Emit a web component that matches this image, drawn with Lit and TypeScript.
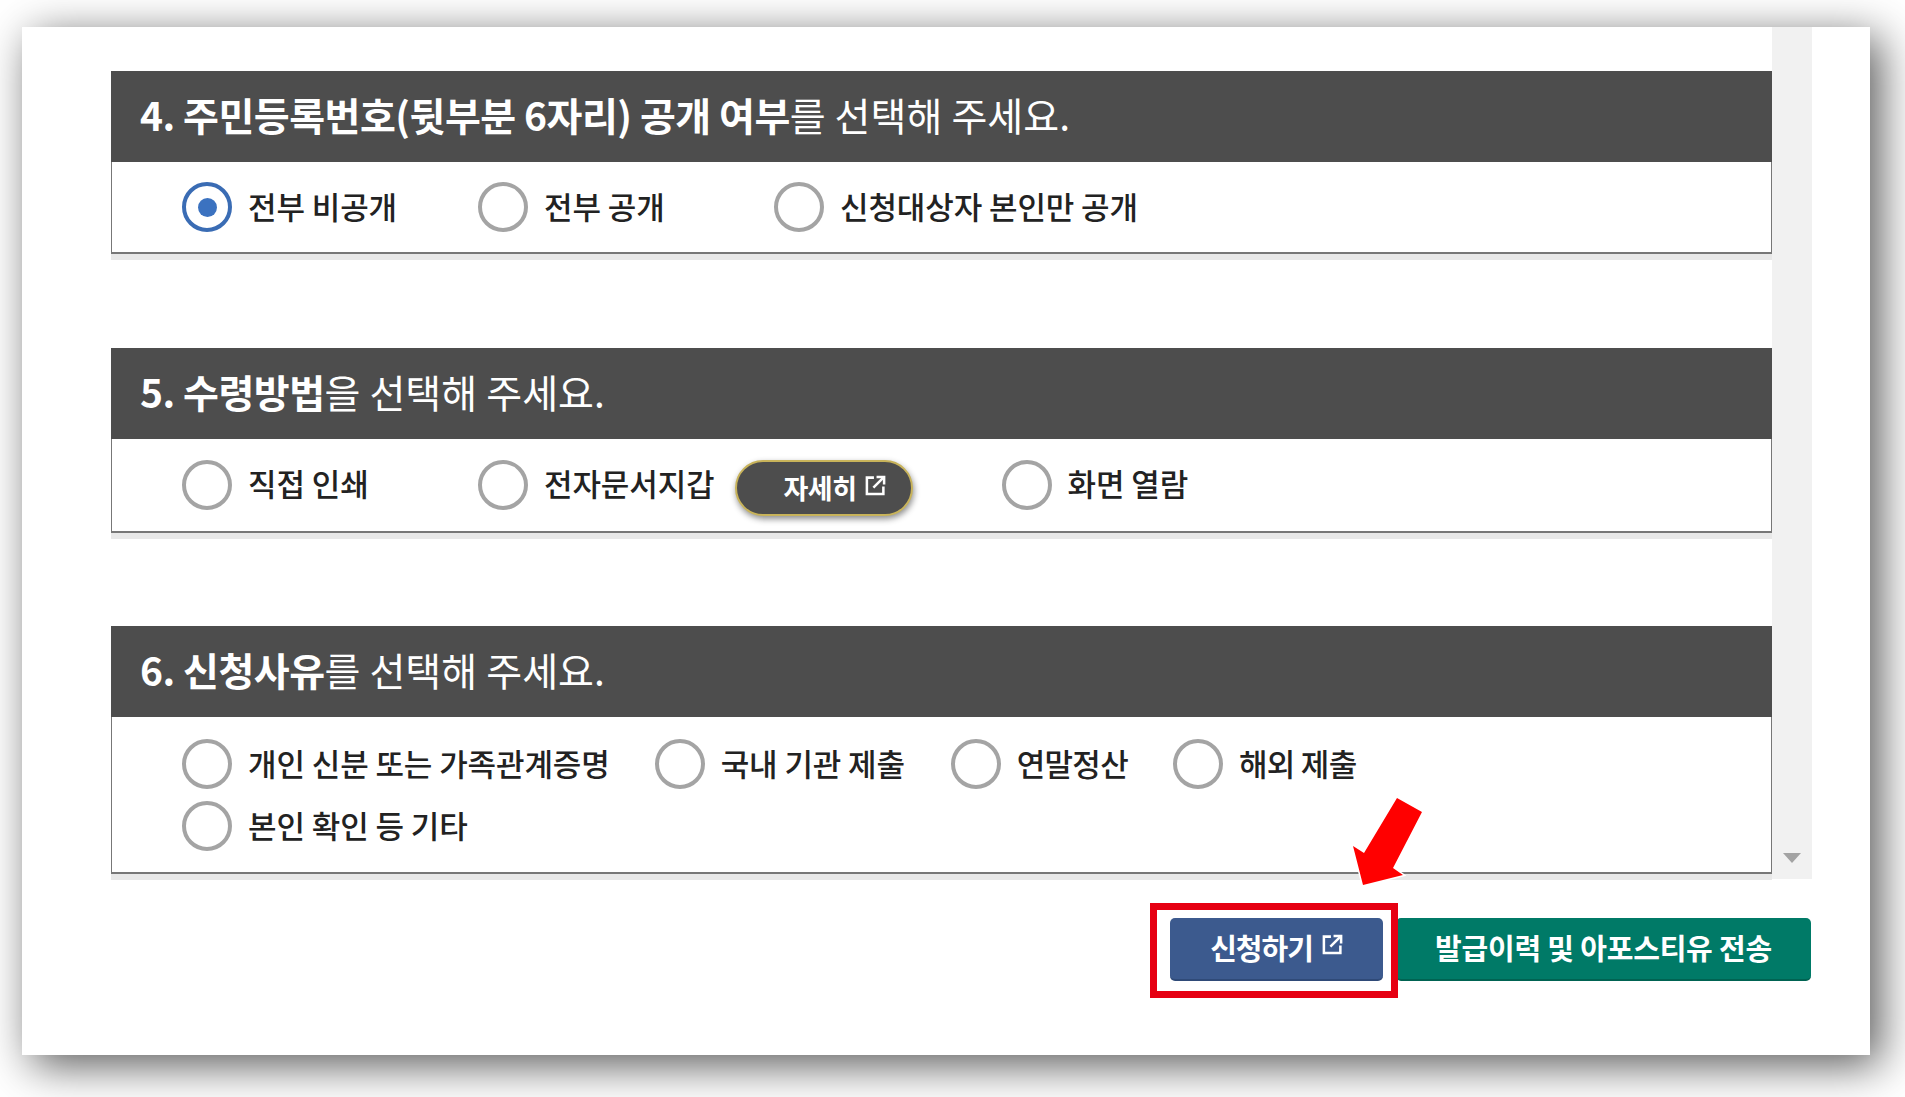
import { LitElement, html, css, svg } from "lit";
import { customElement } from "lit/decorators.js";

const extIcon = html`<svg class="ext" viewBox="0 0 20 20" fill="none" stroke="#fff" stroke-width="2.400">
  <path d="M8.500 2.500H1.800V18H17.500V11" />
  <path d="M8 12L17.500 2.500" />
  <path d="M11 1.800H18.200V9" />
</svg>`;

const arrow = svg`<path d="M45 1L70 15L41 71L51 78L11 88L1 49L12 56Z" fill="#f00" stroke="#fff" stroke-width="3" paint-order="stroke"/>`;

@customElement("app-root")
export class AppRoot extends LitElement {
  static styles = css`
    :host {
      display: block;
      width: 1905px;
      height: 1097px;
      box-sizing: border-box;
      padding: 27px 35px 42px 22px;
      background: #fff;
      overflow: hidden;
      font-family: "Noto Sans CJK KR", "Noto Sans", sans-serif;
      position: relative;
    }
    .panel {
      height: 1028px;
      background: #fff;
      box-shadow: 10px 10px 42px rgba(0, 0, 0, 0.66);
      display: flex;
      flex-direction: column;
    }
    .scroller {
      height: 852px;
      display: flex;
      padding-left: 89px;
    }
    .content {
      width: 1661px;
      padding-top: 44px;
      box-sizing: border-box;
    }
    .track {
      width: 40px;
      background: #f1f1f1;
      position: relative;
    }
    .down {
      position: absolute;
      left: 11px;
      bottom: 16px;
      width: 0;
      height: 0;
      border-left: 9px solid transparent;
      border-right: 9px solid transparent;
      border-top: 10px solid #a3a3a3;
    }
    .section {
      margin-bottom: 87.5px;
      border-bottom: 6px solid #e8e8e8;
    }
    .head {
      height: 91px;
      box-sizing: border-box;
      background: #4d4d4d;
      color: #fff;
      padding: 0 0 5px 29px;
      display: flex;
      align-items: center;
      font-size: 39px;
      font-weight: 400;
      letter-spacing: 0.1px;
      white-space: pre;
    }
    .head b {
      font-weight: 700;
      letter-spacing: -0.5px;
    }
    .body {
      border: 1px solid #777;
      border-top: 0;
      border-bottom-width: 2px;
      padding: 20px 20px 20px 70px;
      display: flex;
      flex-wrap: wrap;
      gap: 12px 45px;
      background: #fff;
    }
    .body.mid {
      padding-top: 21px;
      padding-bottom: 21px;
    }
    .body.tall {
      padding: 22px 200px 21px 70px;
    }
    .opt {
      min-width: 251px;
      display: flex;
      align-items: center;
      font-size: 31px;
      font-weight: 500;
      letter-spacing: -0.1px;
      color: #222;
      white-space: pre;
    }
    .opt.free {
      min-width: 0;
      letter-spacing: -0.7px;
    }
    .txt {
      display: block;
      margin-top: -4px;
    }
    .radio {
      width: 50px;
      height: 50px;
      box-sizing: border-box;
      border: 4px solid #a4a4a4;
      border-radius: 50%;
      margin-right: 16px;
      display: flex;
      align-items: center;
      justify-content: center;
      flex: none;
    }
    .radio.on {
      border-color: #3a6cb4;
    }
    .radio.on::after {
      content: "";
      width: 19px;
      height: 19px;
      border-radius: 50%;
      background: #3b72c0;
    }
    .pill {
      width: 178px;
      height: 56px;
      box-sizing: border-box;
      margin: 0 44px -6px 20px;
      border: 2px solid #c8b35a;
      border-radius: 28px;
      background: #4d4d4d;
      color: #fff;
      font-size: 27px;
      font-weight: 700;
      letter-spacing: -0.5px;
      display: flex;
      align-items: center;
      justify-content: center;
      gap: 8px;
      padding-left: 22px;
      box-shadow: 1px 3px 6px rgba(0, 0, 0, 0.45);
    }
    .ext {
      width: 21px;
      height: 21px;
      flex: none;
      margin-top: -5px;
    }
    .foot {
      display: flex;
      justify-content: flex-end;
      padding: 39px 59px 0 0;
      gap: 13px;
    }
    .btn {
      height: 63px;
      box-sizing: border-box;
      border-radius: 5px;
      padding-bottom: 3px;
      color: #fff;
      font-size: 29px;
      font-weight: 700;
      letter-spacing: -0.2px;
      display: flex;
      align-items: center;
      justify-content: center;
      gap: 9px;
      white-space: pre;
    }
    .apply {
      width: 213px;
      background: #3c5a8e;
      border-bottom: 2px solid #2f4a78;
      letter-spacing: -1px;
    }
    .issue {
      width: 415px;
      background: #007a67;
      border-bottom: 2px solid #006352;
    }
    .mark {
      position: absolute;
      left: 1150px;
      top: 903px;
      width: 248px;
      height: 95px;
      box-sizing: border-box;
      border: 7px solid #e60012;
    }
    .arrow {
      position: absolute;
      left: 1352px;
      top: 797px;
      width: 71px;
      height: 89px;
      overflow: visible;
    }
  `;

  private radio(label: string, on = false, extra: unknown = "", cls = "") {
    return html`<label class="opt ${cls}"><span class="radio ${on ? "on" : ""}"></span><span class="txt">${label}</span>${extra}</label>`;
  }

  render() {
    return html`
      <div class="panel">
        <div class="scroller">
          <div class="content">
            <section class="section">
              <div class="head"><b>4. 주민등록번호(뒷부분 6자리) 공개 여부</b>를 선택해 주세요.</div>
              <div class="body">
                ${this.radio("전부 비공개", true)} ${this.radio("전부 공개")}
                ${this.radio("신청대상자 본인만 공개")}
              </div>
            </section>
            <section class="section">
              <div class="head"><b>5. 수령방법</b>을 선택해 주세요.</div>
              <div class="body mid">
                ${this.radio("직접 인쇄")}
                ${this.radio("전자문서지갑", false, html`<span class="pill">자세히${extIcon}</span>`)}
                ${this.radio("화면 열람")}
              </div>
            </section>
            <section class="section">
              <div class="head"><b>6. 신청사유</b>를 선택해 주세요.</div>
              <div class="body tall">
                ${this.radio("개인 신분 또는 가족관계증명")} ${this.radio("국내 기관 제출")}
                ${this.radio("연말정산", false, "", "free")} ${this.radio("해외 제출", false, "", "free")}
                ${this.radio("본인 확인 등 기타")}
              </div>
            </section>
          </div>
          <div class="track"><span class="down"></span></div>
        </div>
        <div class="foot">
          <div class="btn apply">신청하기${extIcon}</div>
          <div class="btn issue">발급이력 및 아포스티유 전송</div>
        </div>
      </div>
      <div class="mark"></div>
      <svg class="arrow" viewBox="0 0 71 89">${arrow}</svg>
    `;
  }
}
